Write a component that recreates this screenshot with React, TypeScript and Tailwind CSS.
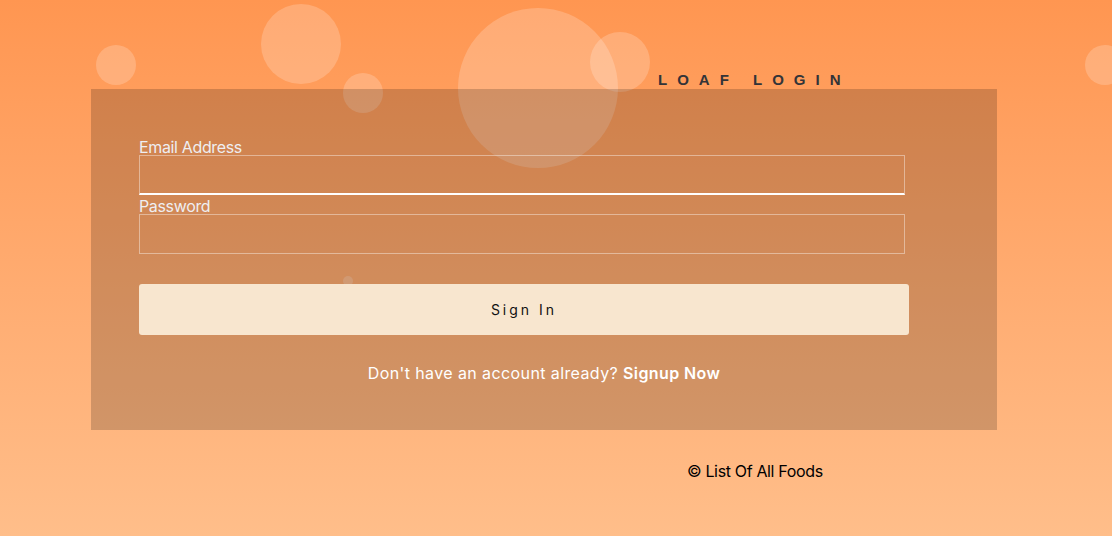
const bubbles = [
  { left: 96, top: 45, size: 40 },
  { left: 261, top: 4, size: 80 },
  { left: 343, top: 73, size: 40 },
  { left: 458, top: 8, size: 160 },
  { left: 590, top: 32, size: 60 },
  { left: 1085, top: 45, size: 40 },
  { left: 343, top: 276, size: 10 },
];

function Field({ label, focused }: { label: string; focused?: boolean }) {
  return (
    <div className="flex flex-col">
      <label className="h-[17px] text-[16px] leading-[18px] tracking-[-0.35px] text-[#eeeef2]">{label}</label>
      <div
        className={
          focused
            ? "h-[40px] w-[766px] border border-white/40 border-b-2 border-b-white"
            : "h-[40px] w-[766px] border border-white/40"
        }
      />
    </div>
  );
}

export default function App() {
  return (
    <div
      className="relative h-[536px] w-[1112px] overflow-hidden bg-gradient-to-b from-[#ff9651] to-[#ffbe8a]"
      style={{ fontFamily: "Inter, 'Liberation Sans', sans-serif" }}
    >
      {/* floating bubbles sit behind the panel */}
      <div className="pointer-events-none absolute inset-0">
        {bubbles.map((b, i) => (
          <div
            key={i}
            className="absolute rounded-full bg-white/20"
            style={{ left: b.left, top: b.top, width: b.size, height: b.size }}
          />
        ))}
      </div>

      <div className="relative">
        <h1
          className="ml-[658px] pt-[71px] text-[15px] font-bold leading-[18px] tracking-[10px] text-[#333438]"
          style={{ fontFamily: "'Liberation Sans', sans-serif" }}
        >
          LOAF LOGIN
        </h1>

        <div className="ml-[91px] flex h-[341px] w-[906px] flex-col bg-black/[0.18] pl-[48px] pt-[49px]">
          <Field label="Email Address" focused />
          <div className="mt-[2px]">
            <Field label="Password" />
          </div>
          <button className="mt-[30px] h-[51px] w-[770px] rounded-[3px] bg-[#f8e6cf] text-[14px] tracking-[3px] text-[#111]">
            Sign In
          </button>
          <p className="-ml-[48px] mt-[28px] w-[906px] text-center text-[16px] leading-[20px] tracking-[0.4px] text-white">
            Don't have an account already? <span className="font-semibold">Signup Now</span>
          </p>
        </div>

        <p className="ml-[687px] mt-[32px] text-[16px] leading-[19px] tracking-[-0.35px] text-black">© List Of All Foods</p>
      </div>
    </div>
  );
}
